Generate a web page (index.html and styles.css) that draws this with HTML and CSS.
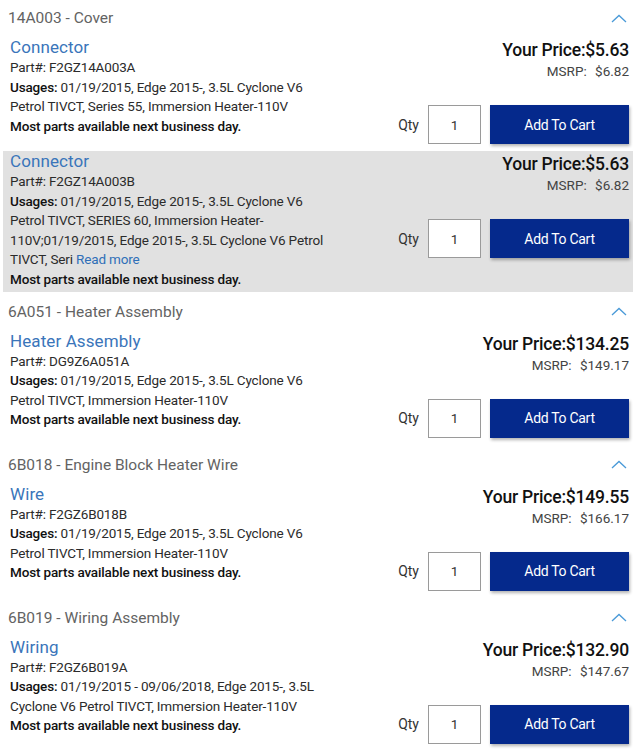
FILE: index.html
```html
<!DOCTYPE html>
<html lang="en">
<head>
    <meta charset="UTF-8">
    <meta name="viewport" content="width=device-width, initial-scale=1.0">
    <title>Parts List</title>
    <link rel="stylesheet" href="styles.css">
</head>
<body>
    <div class="parts">
        <!-- 14A003 -->
        <section class="group">
            <div class="group-head">
                <span>14A003 - Cover</span>
                <svg class="chevron" width="16" height="9" viewBox="0 0 16 9"><path d="M1 8 L8 1.5 L15 8" fill="none" stroke="#4a9ad8" stroke-width="1.3"/></svg>
            </div>
            <div class="part">
                <div class="part-info">
                    <a class="part-name" href="#">Connector</a>
                    <div>Part#: F2GZ14A003A</div>
                    <div><b>Usages:</b> <span>01/19/2015, Edge 2015-, 3.5L Cyclone V6 Petrol TIVCT, Series 55, Immersion Heater-110V</span></div>
                    <div class="avail">Most parts available next business day.</div>
                </div>
                <div class="part-buy">
                    <div class="price">Your Price:$5.63</div>
                    <div class="msrp">MSRP: <span>$6.82</span></div>
                    <div class="cart">
                        <label>Qty</label>
                        <input type="text" value="1">
                        <button>Add To Cart</button>
                    </div>
                </div>
            </div>
            <div class="part hover">
                <div class="part-info">
                    <a class="part-name" href="#">Connector</a>
                    <div>Part#: F2GZ14A003B</div>
                    <div><b>Usages:</b> <span>01/19/2015, Edge 2015-, 3.5L Cyclone V6 Petrol TIVCT, SERIES 60, Immersion Heater-110V;01/19/2015, Edge 2015-, 3.5L Cyclone V6 Petrol TIVCT, Seri</span> <a class="more" href="#">Read more</a></div>
                    <div class="avail">Most parts available next business day.</div>
                </div>
                <div class="part-buy">
                    <div class="price">Your Price:$5.63</div>
                    <div class="msrp">MSRP: <span>$6.82</span></div>
                    <div class="cart">
                        <label>Qty</label>
                        <input type="text" value="1">
                        <button>Add To Cart</button>
                    </div>
                </div>
            </div>
        </section>

        <!-- 6A051 -->
        <section class="group">
            <div class="group-head">
                <span>6A051 - Heater Assembly</span>
                <svg class="chevron" width="16" height="9" viewBox="0 0 16 9"><path d="M1 8 L8 1.5 L15 8" fill="none" stroke="#4a9ad8" stroke-width="1.3"/></svg>
            </div>
            <div class="part">
                <div class="part-info">
                    <a class="part-name" href="#">Heater Assembly</a>
                    <div>Part#: DG9Z6A051A</div>
                    <div><b>Usages:</b> <span>01/19/2015, Edge 2015-, 3.5L Cyclone V6 Petrol TIVCT, Immersion Heater-110V</span></div>
                    <div class="avail">Most parts available next business day.</div>
                </div>
                <div class="part-buy">
                    <div class="price">Your Price:$134.25</div>
                    <div class="msrp">MSRP: <span>$149.17</span></div>
                    <div class="cart">
                        <label>Qty</label>
                        <input type="text" value="1">
                        <button>Add To Cart</button>
                    </div>
                </div>
            </div>
        </section>

        <!-- 6B018 -->
        <section class="group">
            <div class="group-head">
                <span>6B018 - Engine Block Heater Wire</span>
                <svg class="chevron" width="16" height="9" viewBox="0 0 16 9"><path d="M1 8 L8 1.5 L15 8" fill="none" stroke="#4a9ad8" stroke-width="1.3"/></svg>
            </div>
            <div class="part">
                <div class="part-info">
                    <a class="part-name" href="#">Wire</a>
                    <div>Part#: F2GZ6B018B</div>
                    <div><b>Usages:</b> <span>01/19/2015, Edge 2015-, 3.5L Cyclone V6 Petrol TIVCT, Immersion Heater-110V</span></div>
                    <div class="avail">Most parts available next business day.</div>
                </div>
                <div class="part-buy">
                    <div class="price">Your Price:$149.55</div>
                    <div class="msrp">MSRP: <span>$166.17</span></div>
                    <div class="cart">
                        <label>Qty</label>
                        <input type="text" value="1">
                        <button>Add To Cart</button>
                    </div>
                </div>
            </div>
        </section>

        <!-- 6B019 -->
        <section class="group">
            <div class="group-head">
                <span>6B019 - Wiring Assembly</span>
                <svg class="chevron" width="16" height="9" viewBox="0 0 16 9"><path d="M1 8 L8 1.5 L15 8" fill="none" stroke="#4a9ad8" stroke-width="1.3"/></svg>
            </div>
            <div class="part">
                <div class="part-info">
                    <a class="part-name" href="#">Wiring</a>
                    <div>Part#: F2GZ6B019A</div>
                    <div><b>Usages:</b> <span>01/19/2015 - 09/06/2018, Edge 2015-, 3.5L Cyclone V6 Petrol TIVCT, Immersion Heater-110V</span></div>
                    <div class="avail">Most parts available next business day.</div>
                </div>
                <div class="part-buy">
                    <div class="price">Your Price:$132.90</div>
                    <div class="msrp">MSRP: <span>$147.67</span></div>
                    <div class="cart">
                        <label>Qty</label>
                        <input type="text" value="1">
                        <button>Add To Cart</button>
                    </div>
                </div>
            </div>
        </section>
    </div>
</body>
</html>
```

FILE: styles.css
```css
body {
    margin: 0;
    font-family: Roboto, "Liberation Sans", sans-serif;
    color: #2b2b2b;
    background: #fff;
}
.parts {
    padding: 8px 2px 0 3px;
}
.group + .group {
    margin-top: 10px;
}
.group-head {
    display: flex;
    justify-content: space-between;
    align-items: center;
    height: 20px;
    padding: 0 6px 0 5px;
    margin-bottom: 9px;
    font-size: 15.5px;
    color: #636363;
}
.chevron {
    display: block;
}
.part {
    display: flex;
    padding: 0 4px 2px 7px;
}
.part.hover {
    background-color: #e1e1e1;
}
.part-info {
    width: 322px;
    font-size: 13.5px;
    line-height: 19.6px;
    letter-spacing: -0.15px;
}
.part-name {
    display: block;
    font-size: 17px;
    line-height: 21px;
    color: #3a75ba;
    text-decoration: none;
    letter-spacing: 0.1px;
}
.part-info b {
    font-weight: 500;
    color: #111;
}
.more {
    color: #2f6fb8;
    text-decoration: none;
}
.avail {
    font-weight: 500;
    color: #111;
}
.part-buy {
    margin-left: auto;
    display: flex;
    flex-direction: column;
    align-items: flex-end;
    padding-bottom: 5px;
}
.price {
    font-size: 17.5px;
    line-height: 26px;
    font-weight: 500;
    color: #111;
    letter-spacing: -0.2px;
}
.msrp {
    font-size: 13.5px;
    line-height: 16px;
    color: #444;
}
.msrp span {
    margin-left: 5px;
}
.cart {
    display: flex;
    align-items: center;
    margin-top: 26px;
}
.cart label {
    font-size: 14px;
    color: #333;
    margin-right: 9px;
}
.cart input {
    box-sizing: border-box;
    width: 53px;
    height: 39px;
    border: 1px solid #9a9a9a;
    background: #fff;
    text-align: center;
    font-family: inherit;
    font-size: 13.5px;
    color: #333;
    padding: 0;
}
.cart button {
    width: 139px;
    height: 39px;
    margin-left: 9px;
    background-color: #05298c;
    color: #fff;
    border: none;
    font-family: inherit;
    font-size: 14px;
    letter-spacing: -0.3px;
    box-shadow: 1px 2px 3px rgba(0, 0, 0, 0.3);
    cursor: pointer;
}
```
